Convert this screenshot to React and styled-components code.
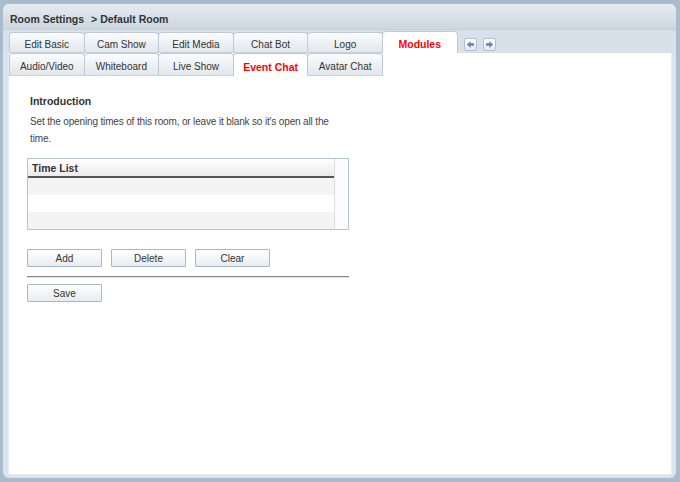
import React from 'react';
import styled, { createGlobalStyle } from 'styled-components';

const FONT = '"Liberation Sans", Arial, sans-serif';

const Global = createGlobalStyle`
  html, body { margin: 0; padding: 0; }
  body {
    background: #a9bccd;
    font-family: ${FONT};
    font-size: 10px;
    color: #333;
  }
`;

const Window = styled.div`
  margin: 4px 4px 4px 3px;
  height: 474px;
  border-radius: 6px;
  background: #dce4eb;
  display: flex;
  flex-direction: column;
  overflow: hidden;
`;

const Header = styled.div`
  height: 26px;
  flex: none;
  display: flex;
  align-items: center;
  padding: 4px 0 0 7px;
  box-sizing: border-box;
  background: linear-gradient(#e6ecf1, #cbd6df);
  border-bottom: 1px solid #c3cfd9;
  font-weight: bold;
  font-size: 10.5px;
  color: #333;
  gap: 7px;
`;

const TabBar = styled.div`
  height: 23px;
  flex: none;
  display: flex;
  align-items: flex-end;
  padding-left: 6px;
  background: #d8e1e9;
`;

const TabRow = styled.div`
  display: flex;
  align-items: flex-end;
`;

const Tab = styled.div`
  width: 75.6px;
  flex: none;
  height: ${(p) => p.$h}px;
  box-sizing: border-box;
  display: flex;
  align-items: center;
  justify-content: center;
  border: 1px solid #bccad6;
  border-bottom: ${(p) => (p.$active ? 'none' : '1px solid #c6d1db')};
  border-radius: 4px 4px 0 0;
  background: ${(p) =>
    p.$active ? '#fff' : 'linear-gradient(#fbfcfd, #e1e7ec)'};
  color: ${(p) => (p.$active ? '#ff0000' : '#333')};
  font-weight: ${(p) => (p.$active ? 'bold' : 'normal')};
  font-size: ${(p) => (p.$active ? '10.5px' : '10px')};
  padding-top: 3px;
  margin-right: -1px;
`;

const Arrows = styled.div`
  display: flex;
  gap: 6px;
  margin-left: 7px;
  margin-bottom: 2px;
`;

const ArrowBtn = styled.div`
  width: 13px;
  height: 13px;
  box-sizing: border-box;
  border: 1px solid #b2c1cf;
  border-radius: 2px;
  background: linear-gradient(#ffffff, #e3e9ee);
  display: flex;
  align-items: center;
  justify-content: center;
`;

const Body = styled.div`
  flex: 1;
  margin: 0 4px 3px 5px;
  background: #fff;
  border: 1px solid #e6ebef;
  border-top: none;
  display: flex;
  flex-direction: column;
`;

const SecondRow = styled(TabRow)`
  padding-left: 0;
  height: 23px;
  align-items: flex-start;
`;

const Content = styled.div`
  padding: 19px 0 0 18px;
  display: flex;
  flex-direction: column;
  width: 322px;
`;

const Title = styled.div`
  font-weight: bold;
  font-size: 10.5px;
  color: #333;
  padding-left: 3px;
`;

const Intro = styled.p`
  margin: 6px 0 0 3px;
  line-height: 17px;
  font-size: 10px;
  color: #444;
  width: 300px;
  letter-spacing: -0.15px;
`;

const Grid = styled.div`
  margin-top: 11px;
  height: 72px;
  box-sizing: border-box;
  border: 1px solid #b4c4d2;
  display: flex;
`;

const GridMain = styled.div`
  flex: 1;
  display: flex;
  flex-direction: column;
`;

const GridHead = styled.div`
  height: 19px;
  box-sizing: border-box;
  display: flex;
  align-items: center;
  padding-left: 4px;
  font-weight: bold;
  font-size: 10.5px;
  background: linear-gradient(#ffffff, #ebebeb);
  border-bottom: 2px solid #555;
`;

const GridRow = styled.div`
  height: 17px;
  background: ${(p) => (p.$odd ? '#fff' : '#f4f4f4')};
`;

const ScrollCol = styled.div`
  width: 13px;
  border-left: 1px solid #dedede;
  background: #fbfbfb;
`;

const Buttons = styled.div`
  display: flex;
  gap: 9px;
  margin-top: 19px;
`;

const Button = styled.button`
  width: 75px;
  height: 18px;
  box-sizing: border-box;
  border: 1px solid #a7b8c8;
  border-radius: 1px;
  background: linear-gradient(#ffffff, #e7ecf1);
  font-family: ${FONT};
  font-size: 10px;
  color: #333;
  padding: 0;
`;

const Divider = styled.hr`
  margin: 9px 0 6px 0;
  border: none;
  border-top: 1px solid #888;
  border-bottom: 1px solid #e0e0e0;
  width: 322px;
`;

const Arrow = ({ dir }) => (
  <svg width="7" height="7" viewBox="0 0 7 7">
    {dir === 'left' ? (
      <path d="M0 3.5 L3.5 0 V2.3 H7 V4.7 H3.5 V7 Z" fill="#5c86ad" />
    ) : (
      <path d="M7 3.5 L3.5 0 V2.3 H0 V4.7 H3.5 V7 Z" fill="#5c86ad" />
    )}
  </svg>
);

const row1 = ['Edit Basic', 'Cam Show', 'Edit Media', 'Chat Bot', 'Logo', 'Modules'];
const row2 = ['Audio/Video', 'Whiteboard', 'Live Show', 'Event Chat', 'Avatar Chat'];

export default function App() {
  return (
    <>
      <Global />
      <Window>
        <Header>
          <span>Room Settings</span>
          <span>&gt; Default Room</span>
        </Header>
        <TabBar>
          <TabRow>
            {row1.map((t) => (
              <Tab key={t} $h={t === 'Modules' ? 22 : 21} $active={t === 'Modules'}>{t}</Tab>
            ))}
          </TabRow>
          <Arrows>
            <ArrowBtn><Arrow dir="left" /></ArrowBtn>
            <ArrowBtn><Arrow dir="right" /></ArrowBtn>
          </Arrows>
        </TabBar>
        <Body>
          <SecondRow>
            {row2.map((t) => (
              <Tab key={t} $h={23} $active={t === 'Event Chat'}>{t}</Tab>
            ))}
          </SecondRow>
          <Content>
            <Title>Introduction</Title>
            <Intro>
              Set the opening times of this room, or leave it blank so it's open all the time.
            </Intro>
            <Grid>
              <GridMain>
                <GridHead>Time List</GridHead>
                <GridRow />
                <GridRow $odd />
                <GridRow />
              </GridMain>
              <ScrollCol />
            </Grid>
            <Buttons>
              <Button>Add</Button>
              <Button>Delete</Button>
              <Button>Clear</Button>
            </Buttons>
            <Divider />
            <Button>Save</Button>
          </Content>
        </Body>
      </Window>
    </>
  );
}
